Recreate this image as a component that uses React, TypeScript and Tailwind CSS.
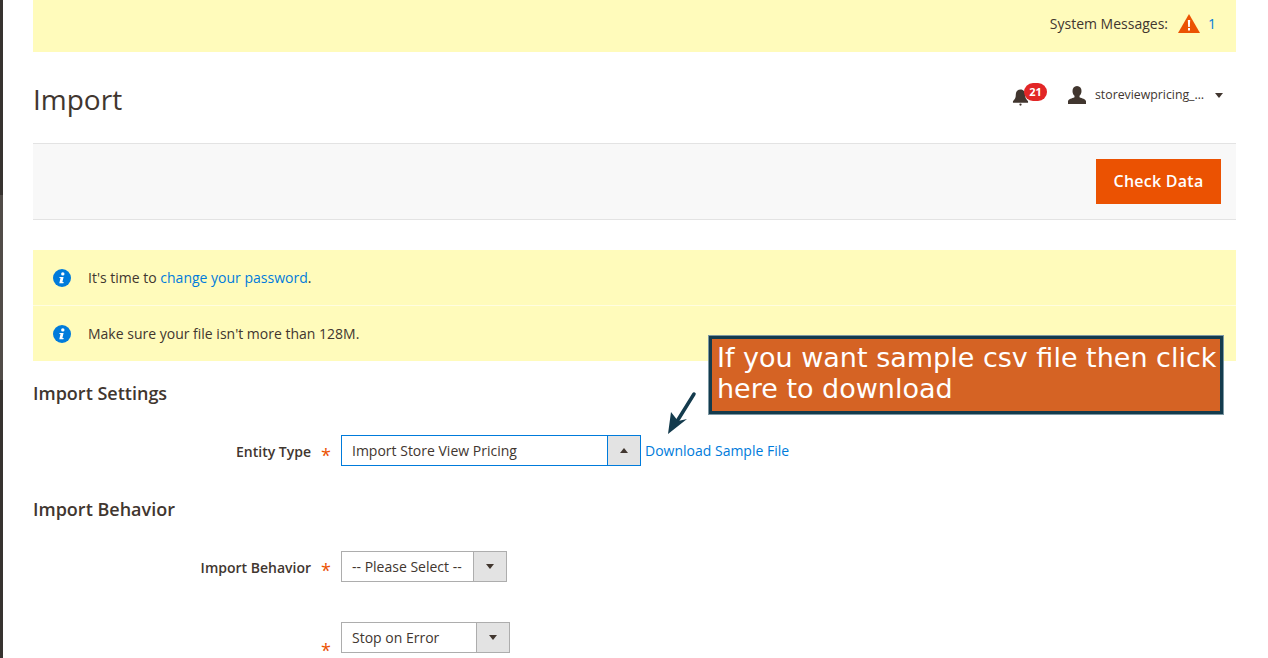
const Info = () => (
  <svg width="18" height="18" viewBox="0 0 18 18" className="shrink-0">
    <circle cx="9" cy="9" r="9" fill="#007bdb" />
    <circle cx="9.8" cy="4.9" r="1.7" fill="#fff" />
    <path d="M6.6 8h4l-1.2 5.1h1.3l-.3 1.1H6.300l1.200-5.100H6.300z" fill="#fff" />
  </svg>
);

const Arrow = ({ up }: { up?: boolean }) => (
  <span
    className={
      up
        ? "w-0 h-0 border-x-[4px] border-x-transparent border-b-[5px] border-b-[#41362f]"
        : "w-0 h-0 border-x-[4px] border-x-transparent border-t-[5px] border-t-[#41362f]"
    }
  />
);

const Star = () => <span className="text-[#eb5202] text-[18px] leading-[14px] translate-y-[3px]">*</span>;

export default function App() {
  return (
    <div className="h-[658px] w-[1268px] overflow-hidden flex bg-white text-[14px] text-[#41362f] [font-family:'Open_Sans',sans-serif] relative">
      <div className="w-[3px] shrink-0 flex flex-col bg-[#373330]">
        <div className="h-[195px]" />
        <div className="h-[185px] bg-[#514c48]" />
      </div>

      <div className="w-[1203px] ml-[30px] shrink-0">
        <div className="h-[52px] bg-[#fffbbb] flex items-center justify-end pr-[20px] pb-[6px]">
          <span>System Messages:</span>
          <svg width="22" height="19" viewBox="0 0 22 19" className="ml-[10px]">
            <path d="M11 0 22 19H0z" fill="#eb5202" />
            <path d="M9.800 6h2.400l-.4 7h-1.600z" fill="#fff" />
            <rect x="10" y="14" width="2" height="2.500" fill="#fff" />
          </svg>
          <span className="ml-[8px] text-[#007bdb]">1</span>
        </div>

        <div className="h-[91px] flex justify-between items-start">
          <h1 className="text-[28px] leading-[38px] font-normal mt-[28px]">Import</h1>
          <div className="flex items-center mt-[31px] pr-[13px] text-[12.3px] h-[24px]">
            <div className="relative w-[35px] h-[24px]">
              <svg width="17" height="18" viewBox="0 0 18 18" className="absolute left-0 top-[5px]">
                <path d="M9 1c3.500 0 5 2.800 5 6 0 3 1 4.500 3 6.500V15H1v-1.500C3 11.500 4 10 4 7c0-3.200 1.500-6 5-6z" fill="#41362f" />
                <circle cx="9" cy="17" r="1.200" fill="#41362f" />
              </svg>
              <span className="absolute left-[12px] top-0 w-[23px] h-[18px] rounded-full bg-[#e22626] text-white text-[11px] font-bold leading-[18px] text-center">21</span>
            </div>
            <svg width="20" height="18" viewBox="0 0 20 18" className="ml-[20px]">
              <path d="M10 0c3 0 4.500 2.200 4.500 5 0 2-.8 3.800-2 4.800v1.400c2.500 1 6 2 6.500 3.800V18H1v-3c.5-1.800 4-2.800 6.500-3.800V9.800c-1.200-1-2-2.800-2-4.800 0-2.800 1.500-5 4.500-5z" fill="#41362f" />
            </svg>
            <span className="ml-[8px] w-[111px] whitespace-nowrap">storeviewpricing_…</span>
            <span className="ml-[9px] flex"><Arrow /></span>
          </div>
        </div>

        <div className="h-[77px] bg-[#f8f8f8] border-y border-[#e3e3e3] flex items-center justify-end pr-[15px]">
          <button className="w-[125px] h-[45px] pb-[2px] bg-[#eb5202] text-white text-[16px] font-semibold tracking-[0.25px]">Check Data</button>
        </div>

        <div className="mt-[30px] bg-[#fffbbb]">
          <div className="h-[56px] flex items-center pl-[20px] gap-[17px] border-b border-[#fffde0]">
            <Info />
            <span>It's time to <a className="text-[#007bdb]">change your password</a>.</span>
          </div>
          <div className="h-[55px] flex items-center pl-[20px] gap-[17px]">
            <Info />
            <span>Make sure your file isn't more than 128M.</span>
          </div>
        </div>

        <h2 className="text-[18px] leading-[24px] font-semibold mt-[20px]">Import Settings</h2>

        <div className="flex items-center mt-[30px] h-[31px]">
          <label className="w-[278px] text-right font-semibold pt-[2px]">Entity Type</label>
          <span className="w-[30px] pl-[10px] flex pt-[2px]"><Star /></span>
          <div className="w-[300px] h-[31px] border border-[#007bdb] flex">
            <span className="flex-1 pl-[10px] leading-[29px]">Import Store View Pricing</span>
            <span className="w-[33px] border-l border-[#007bdb] bg-[#e3e3e3] flex items-center justify-center"><Arrow up /></span>
          </div>
          <a className="ml-[4px] text-[#007bdb]">Download Sample File</a>
        </div>

        <h2 className="text-[18px] leading-[24px] font-semibold mt-[31px]">Import Behavior</h2>

        <div className="flex items-center mt-[30px] h-[31px]">
          <label className="w-[278px] text-right font-semibold pt-[2px]">Import Behavior</label>
          <span className="w-[30px] pl-[10px] flex"><Star /></span>
          <div className="w-[166px] h-[31px] border border-[#adadad] flex">
            <span className="flex-1 pl-[10px] leading-[29px]">-- Please Select --</span>
            <span className="w-[33px] border-l border-[#adadad] bg-[#e3e3e3] flex items-center justify-center"><Arrow /></span>
          </div>
        </div>

        <div className="flex items-center mt-[40px] h-[31px]">
          <span className="ml-[278px] w-[30px] pl-[10px] flex translate-y-[9px]"><Star /></span>
          <div className="w-[169px] h-[31px] border border-[#adadad] flex">
            <span className="flex-1 pl-[10px] leading-[29px]">Stop on Error</span>
            <span className="w-[33px] border-l border-[#adadad] bg-[#e3e3e3] flex items-center justify-center"><Arrow /></span>
          </div>
        </div>
      </div>

      <div className="absolute left-[708px] top-[335px] w-[516px] h-[80px] bg-[#d56324] border-[4px] border-[#143b4d] outline outline-1 outline-[#7d98a3] -outline-offset-1 text-white text-[27px] leading-[31px] pl-[5px] pt-[3px] [font-family:'DejaVu_Sans',sans-serif]">
        If you want sample csv file then click here to download
      </div>

      <svg width="32" height="46" viewBox="0 0 32 46" className="absolute left-[666px] top-[391px]">
        <path d="M28 3 10 32" stroke="#143b4d" strokeWidth="3.500" strokeLinecap="round" fill="none" />
        <path d="M2 43 5 21 12 30 21 28z" fill="#143b4d" />
      </svg>
    </div>
  );
}
